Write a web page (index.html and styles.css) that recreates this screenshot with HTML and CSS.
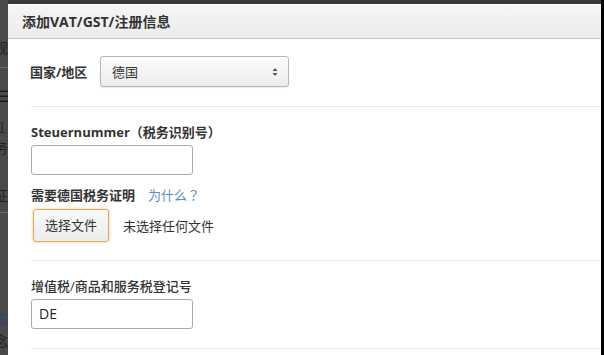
FILE: index.html
```html
<!DOCTYPE html>
<html lang="zh-CN">
<head>
<meta charset="utf-8">
<link rel="stylesheet" href="styles.css">
</head>
<body>
<div class="backdrop">
  <div class="bg-item bg-a">视规</div>
  <div class="bg-rule bg-r1"></div>
  <div class="bg-item bg-b">☰</div>
  <div class="bg-item bg-c">1</div>
  <div class="bg-item bg-d">服务</div>
  <div class="bg-item bg-e">特征</div>
  <div class="bg-rule bg-r2"></div>
  <div class="bg-item bg-f">自主</div>
  <div class="bg-item bg-g">概念</div>
</div>

<div class="modal">
  <div class="modal-header">添加VAT/GST/注册信息</div>
  <div class="modal-body">
    <div class="row country-row">
      <span class="label strong">国家/地区</span>
      <div class="select">
        <span>德国</span>
        <svg class="arrows" width="6" height="10" viewBox="0 0 6 10"><path d="M3 1 L5.5 4 H0.5 Z M3 9 L5.5 6 H0.5 Z" fill="#555"/></svg>
      </div>
    </div>
    <div class="sep sep1"></div>

    <div class="section">
      <div class="label strong">Steuernummer<span class="punct" lang="zh-TW">（</span><span class="cjk">税务识别号</span><span class="punct" lang="zh-TW">）</span></div>
      <div class="input"></div>
      <div class="label strong cert">需要德国税务证明<a class="why">为什么<span class="punct" lang="zh-TW">？</span></a></div>
      <div class="file-row">
        <div class="file-btn">选择文件</div>
        <span class="file-none">未选择任何文件</span>
      </div>
    </div>
    <div class="sep sep2"></div>

    <div class="section">
      <div class="label medium">增值税/商品和服务税登记号</div>
      <div class="input">DE</div>
    </div>
    <div class="sep sep3"></div>
  </div>
</div>
<div class="edge"></div>
</body>
</html>
```

FILE: styles.css
```css
html, body {
  margin: 0;
  padding: 0;
  height: 100%;
  overflow: hidden;
}
body {
  background: #3a3a3a;
  font-family: "Open Sans", "Noto Sans CJK SC", sans-serif;
  color: #333;
  position: relative;
}

/* backdrop page, mostly hidden behind the modal */
.backdrop {
  width: 8px;
  height: 100%;
  overflow: hidden;
  background: #4a4a4a;
  display: flex;
  flex-direction: column;
}
.bg-item {
  font-size: 14px;
  line-height: 18px;
  color: #222;
  white-space: nowrap;
  margin-left: -20px;
  font-family: "Noto Sans CJK SC", sans-serif;
}
.bg-rule { height: 1px; background: #666; flex: none; }
.bg-a { margin-top: 38px; }
.bg-r1 { margin-top: 11px; }
.bg-b { margin-top: 18px; margin-left: -4px; font-size: 16px; color: #1a1a1a; }
.bg-c { margin-top: 14px; margin-left: -2px; color: #2a2a2a; }
.bg-d { margin-top: 2px; }
.bg-e { margin-top: 30px; }
.bg-r2 { margin-top: 8px; }
.bg-f { margin-top: 95px; color: #2d4470; }
.bg-g { margin-top: 5px; }

.modal {
  position: absolute;
  left: 8px;
  top: 4px;
  width: 620px;
  bottom: 0;
  overflow: hidden;
  background: #fff;
}
.modal-header {
  height: 34px;
  line-height: 35px;
  padding-left: 14px;
  font-size: 14px;
  font-weight: 700;
  color: #333;
  background: linear-gradient(#f6f6f6, #ebebeb);
  border-bottom: 1px solid #c6c6c6;
  box-shadow: inset 0 1px 0 #fff;
}
.modal-body {
  padding-left: 23px;
}
.label {
  font-size: 13px;
  line-height: 18px;
  color: #333;
}
.cjk { font-family: "Noto Sans CJK SC", sans-serif; }
.punct { font-family: "Noto Sans CJK TC", sans-serif; }
.strong { font-weight: 700; }
.medium { font-weight: 500; }

.row { display: flex; align-items: center; }
.country-row { padding-top: 17px; }
.country-row .label { width: 70px; margin-left: -1px; }
.select {
  height: 29px;
  border: 1px solid #b7b7b7;
  border-radius: 3px;
  background: linear-gradient(#fcfcfc, #ececec);
  box-shadow: 0 1px 1px rgba(0,0,0,0.08);
  display: flex;
  align-items: center;
  justify-content: space-between;
  padding: 0 10px 0 11px;
  width: 166px;
  font-size: 13px;
  font-family: "Noto Sans CJK SC", sans-serif;
}
.arrows { display: block; }

.sep {
  height: 1px;
  background: #e6e6e6;
}
.sep1 { margin-top: 19px; }
.sep2 { margin-top: 18px; }
.sep3 { margin-top: 19px; }

.section { padding-top: 16px; }
.input {
  margin-top: 4px;
  height: 28px;
  border: 1px solid #aaa;
  border-radius: 3px;
  background: #fff;
  font-size: 14px;
  line-height: 28px;
  padding-left: 7px;
  width: 153px;
  color: #222;
}
.cert { margin-top: 11px; }
.why {
  color: #5b8fc2;
  font-weight: 400;
  margin-left: 13px;
  font-family: "Noto Sans CJK SC", sans-serif;
}
.file-row {
  display: flex;
  align-items: center;
  margin-top: 5px;
}
.file-btn {
  margin-left: 2px;
  width: 74px;
  height: 31px;
  border: 1px solid #e2a95c;
  border-radius: 3px;
  box-shadow: 0 0 3px rgba(232, 165, 80, 0.7);
  background: linear-gradient(#fafafa, #ebebeb);
  font-size: 13px;
  line-height: 31px;
  text-align: center;
  color: #333;
}
.file-none {
  margin-left: 14px;
  font-size: 13px;
  color: #333;
}

.edge {
  position: absolute;
  right: 0;
  top: 0;
  bottom: 0;
  width: 3px;
  background: #000;
}
```
